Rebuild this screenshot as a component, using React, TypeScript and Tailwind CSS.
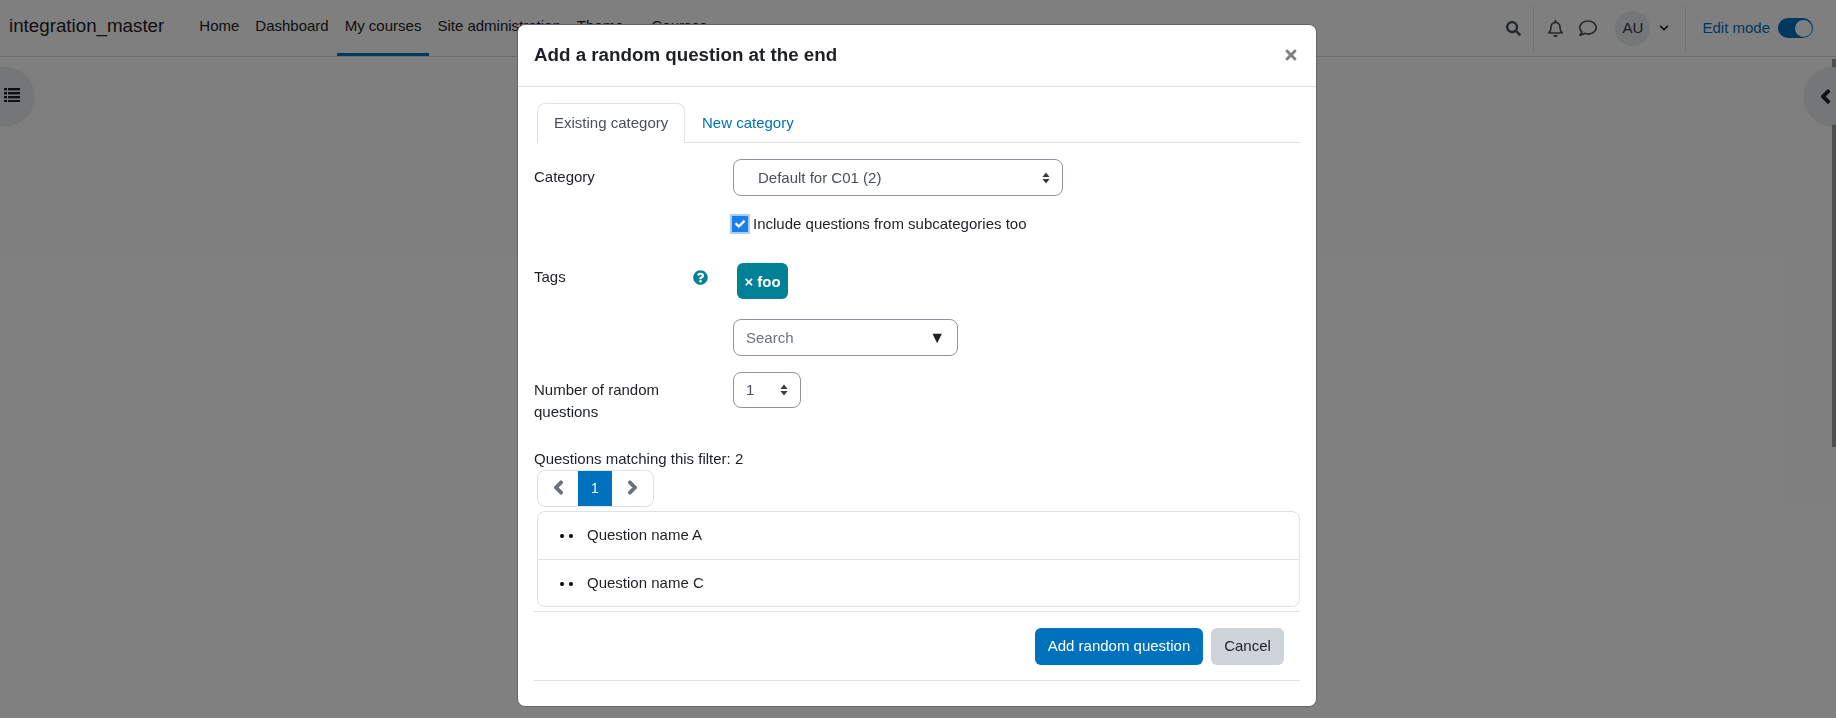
import { FaCheck, FaChevronDown, FaChevronLeft, FaChevronRight, FaQuestionCircle, FaRegBell, FaRegComment, FaSearch, FaTimes } from 'react-icons/fa'

const navItems = ['Home', 'Dashboard', 'My courses', 'Site administration', 'Theme', 'Courses']

function SortArrows() {
  return (
    <svg viewBox="0 0 8 12" className="h-[12px] w-[8px]" fill="#343a40">
      <path d="M4 0.5 7.5 5H0.5Z" />
      <path d="M4 11.5 0.5 7H7.5Z" />
    </svg>
  )
}

function ListIcon() {
  return (
    <svg viewBox="0 0 16 14" className="h-[14px] w-[16px]" fill="#1d2125">
      {[0, 4, 8, 12].map((y) => (
        <g key={y}>
          <rect x="0" y={y} width="3" height="2.4" />
          <rect x="4" y={y} width="12" height="2.4" />
        </g>
      ))}
    </svg>
  )
}

function NavBar() {
  return (
    <nav className="flex h-[57px] items-start border-b border-[#d9d9d9] bg-white">
      <div className="ml-[9px] mt-[12px] text-[18.75px] leading-[28px] text-[#1d2125]">integration_master</div>
      <ul className="ml-[27px] flex">
        {navItems.map((item) => (
          <li
            key={item}
            className={`h-[56px] px-[8px] pt-[15px] text-[15px] leading-[22px] text-[#1d2125] ${item === 'My courses' ? 'border-b-[3px] border-[#0071bc]' : ''} ${item === 'Courses' ? 'ml-[12px]' : ''}`}
          >
            {item}
          </li>
        ))}
      </ul>
      <div className="ml-auto flex h-[56px] items-center pr-[23px]">
        <FaSearch className="size-[15px] text-[#495057]" />
        <div className="ml-[12px] h-[45px] w-px bg-[#dee2e6]" />
        <FaRegBell className="ml-[13px] size-[17px] text-[#495057]" />
        <FaRegComment className="ml-[15px] size-[18px] text-[#495057]" />
        <div className="ml-[18px] flex size-[35px] items-center justify-center rounded-full bg-[#e9ecef] text-[15px] text-[#343a40]">AU</div>
        <FaChevronDown className="ml-[9px] size-[10px] text-[#1d2125]" />
        <div className="ml-[16px] h-[45px] w-px bg-[#dee2e6]" />
        <span className="ml-[16px] text-[15px] text-[#0071bc]">Edit mode</span>
        <div className="ml-[8px] flex h-[20px] w-[35px] items-center justify-end rounded-full bg-[#0071bc] pr-[1.5px]">
          <div className="size-[17px] rounded-full bg-white" />
        </div>
      </div>
    </nav>
  )
}

function Page() {
  return (
    <div className="relative h-[718px] overflow-hidden bg-white">
      <NavBar />
      <div className="absolute right-0 top-[59px] h-[388px] w-[4px] bg-[#9f9f9f]" />
      <div className="absolute left-[-24px] top-[67px] flex size-[58px] items-center justify-end rounded-full bg-[#e9ecef] pb-[3px] pr-[14px] shadow">
        <ListIcon />
      </div>
      <div className="absolute left-[1804px] top-[67px] flex size-[58px] items-center rounded-full bg-[#e9ecef] pl-[14px] shadow">
        <FaChevronLeft className="size-[15px] text-[#1d2125]" stroke="currentColor" strokeWidth={50} />
      </div>
    </div>
  )
}

function FormLabel({ children }: { children: React.ReactNode }) {
  return <div className="w-[199px] shrink-0 text-[15px] leading-[22px] text-[#1d2125]">{children}</div>
}

function Modal() {
  return (
    <div className="absolute left-[517px] top-[24px] h-[683px] w-[800px] rounded-lg border border-[#666666] bg-white text-[15px] leading-[22px] text-[#1d2125] will-change-transform">
      <div className="flex h-[62px] items-center justify-between border-b border-[#dee2e6] px-4 pb-[1px]">
        <h5 className="text-[18.75px] font-bold text-[#1d2125]">Add a random question at the end</h5>
        <FaTimes className="mr-[1px] size-[16px] text-[#808080]" />
      </div>
      <div className="px-4">
        <div className="ml-[3px] mt-[16px] flex h-[40px] border-b border-[#dee2e6]">
          <div className="h-[40px] w-[148px] shrink-0 rounded-t-lg border border-b-0 border-[#dee2e6] bg-white pl-[16px] pt-[8px] text-[#495057]">Existing category</div>
          <div className="pl-[17px] pt-[9px] text-[#0071bc]">New category</div>
        </div>

        <div className="mt-[16px] flex">
          <div className="pt-[7px]"><FormLabel>Category</FormLabel></div>
          <div className="flex h-[37px] w-[330px] items-center justify-between rounded-lg border border-[#8f959e] pl-[24px] pr-[12px] text-[#495057]">
            Default for C01 (2)
            <SortArrows />
          </div>
        </div>

        <div className="ml-[196px] mt-[17px] flex h-[21px] items-center">
          <div className="flex size-[20px] shrink-0 items-center justify-center border-2 border-[#a6cdf5]">
            <div className="flex size-[16px] items-center justify-center bg-[#1a7fe8]">
              <FaCheck className="size-[10px] text-white" stroke="currentColor" strokeWidth={30} />
            </div>
          </div>
          <span className="ml-[3px]">Include questions from subcategories too</span>
        </div>

        <div className="mt-[29px] flex h-[36px]">
          <div className="relative pt-[3px]">
            <FormLabel>Tags</FormLabel>
            <FaQuestionCircle className="absolute left-[159px] top-[7px] size-[15px] text-[#008196]" />
          </div>
          <div className="ml-[4px] flex h-[36px] w-[51px] items-center justify-center rounded-md bg-[#008196] pt-[1px] font-bold text-white">× foo</div>
        </div>

        <div className="ml-[199px] mt-[20px] flex h-[37px] w-[225px] items-center justify-between rounded-lg border border-[#8f959e] pl-[12px] pr-[12px] text-[#6a737b]">
          Search
          <span className="text-[16px] text-[#1d2125]">▼</span>
        </div>

        <div className="mt-[16px] flex h-[67px]">
          <div className="w-[199px] shrink-0 pt-[7px]"><div className="w-[150px]">Number of random questions</div></div>
          <div className="flex h-[36px] w-[68px] items-center justify-between rounded-lg border border-[#8f959e] pl-[12px] pr-[12px] text-[#495057]">
            1
            <SortArrows />
          </div>
        </div>

        <div className="mt-[9px] h-[22px]">Questions matching this filter: 2</div>

        <div className="ml-[3px] flex h-[37px] w-[117px] overflow-hidden rounded-lg border border-[#dee2e6]">
          <div className="flex w-[40px] items-center justify-center pb-[3px]"><FaChevronLeft className="size-[15px] text-[#6a737b]" stroke="currentColor" strokeWidth={50} /></div>
          <div className="flex w-[34px] items-center justify-center bg-[#0071bc] pb-[1px] text-[14px] text-white">1</div>
          <div className="flex flex-1 items-center justify-center pb-[3px]"><FaChevronRight className="size-[15px] text-[#6a737b]" stroke="currentColor" strokeWidth={50} /></div>
        </div>

        <div className="ml-[3px] mt-[4px] h-[96px] rounded-lg border border-[#dee2e6]">
          {['Question name A', 'Question name C'].map((name, i) => (
            <div key={name} className={`flex items-center ${i === 0 ? 'h-[48px] border-b border-[#dee2e6]' : 'h-[47px]'}`}>
              <span className="ml-[22px] size-[4px] rounded-full bg-black" />
              <span className="ml-[5px] size-[4px] rounded-full bg-black" />
              <span className="ml-[14px] pb-[2px]">{name}</span>
            </div>
          ))}
        </div>

        <div className="mt-[4px] flex h-[70px] items-center justify-end gap-[8px] border-y border-[#dee2e6] pr-[16px]">
          <div className="flex h-[37px] w-[168px] items-center justify-center rounded-md bg-[#0071bc] text-white">Add random question</div>
          <div className="flex h-[37px] w-[73px] items-center justify-center rounded-md bg-[#ced4da] text-[#1d2125]">Cancel</div>
        </div>
      </div>
    </div>
  )
}

export default function App() {
  return (
    <div className="relative h-[718px] overflow-hidden font-['Liberation_Sans',Arial,sans-serif]">
      <Page />
      <div className="absolute inset-0 bg-black/50" />
      <Modal />
    </div>
  )
}
